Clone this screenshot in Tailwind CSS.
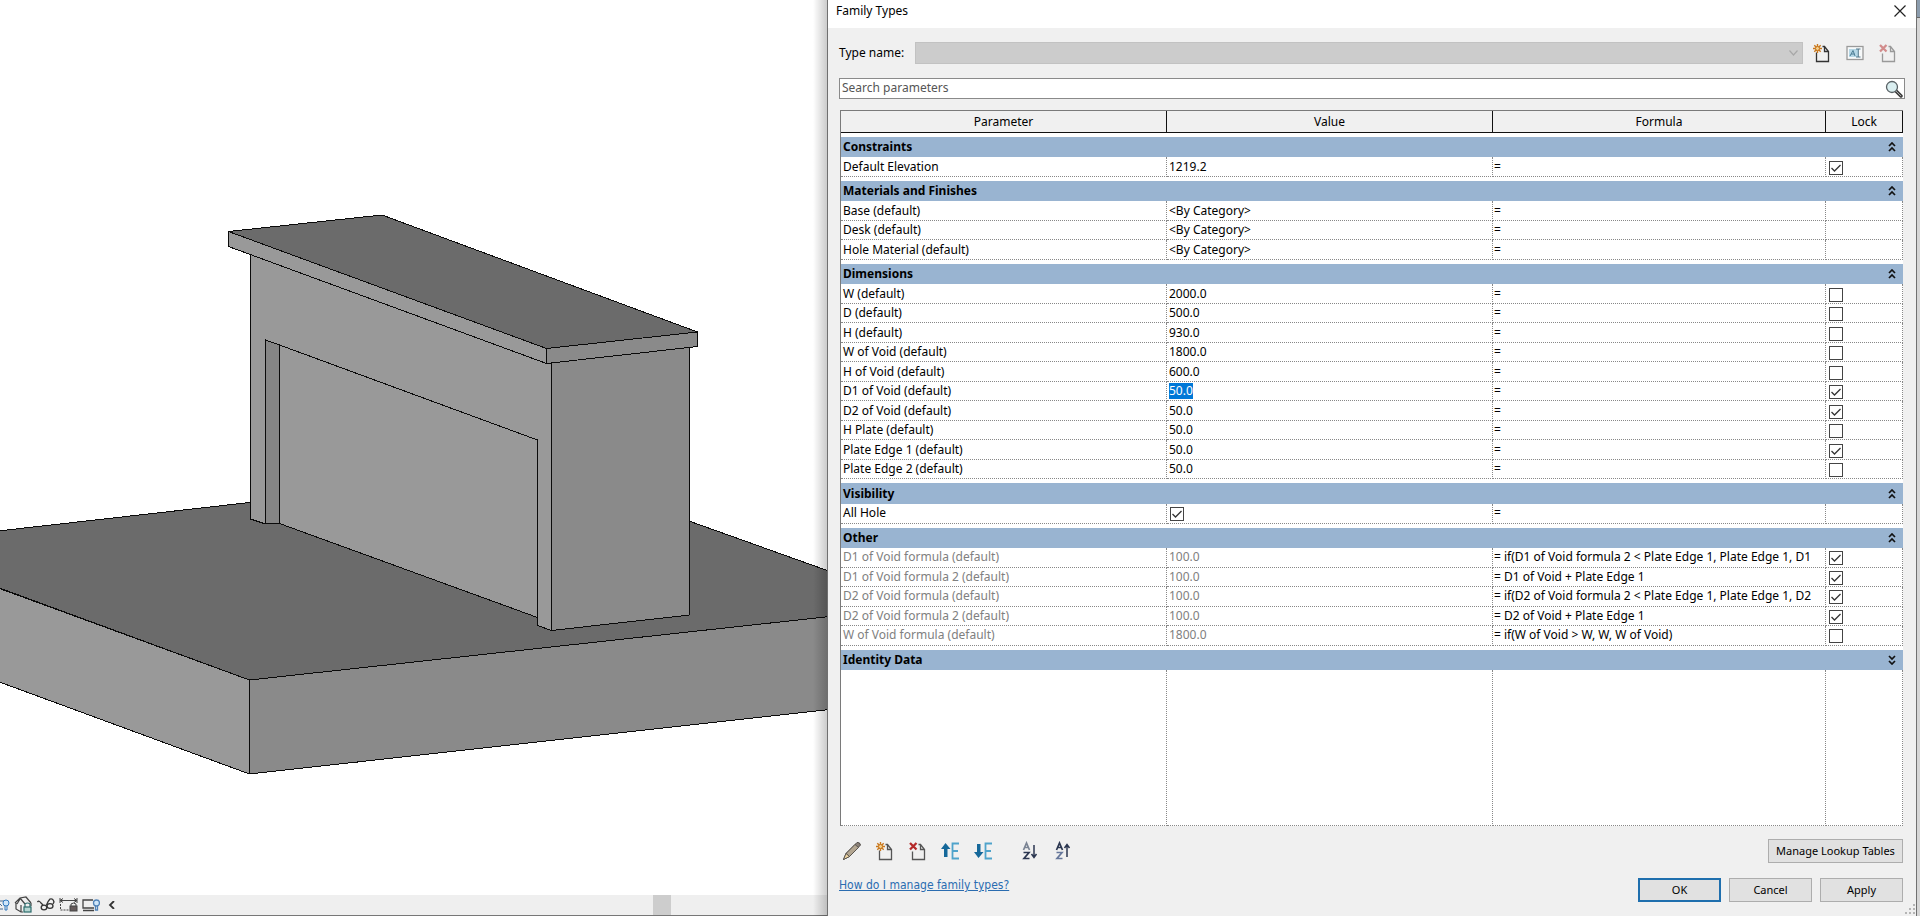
<!DOCTYPE html>
<html lang="en">
<head>
<meta charset="utf-8">
<title>Family Types</title>
<script src="https://cdn.jsdelivr.net/npm/@tailwindcss/browser@4"></script>
</head>
<body class="bg-white text-black text-[12px] leading-4 font-['Noto_Sans',sans-serif]">
<svg class="hidden" aria-hidden="true">
  <symbol id="page-new" viewBox="0 0 20 20">
    <path d="M4.500 9.500V18.500H16.500V8.500L12.500 3.500H10.500M12.500 3.500V8.500H16.500" fill="none" stroke="currentColor" stroke-width="1.300"/>
    <path d="M5.500 1V10M1 5.500H10M2.300 2.300L8.700 8.700M8.700 2.300L2.300 8.700" stroke="#c9771c" stroke-width="1.400"/>
    <circle cx="5.500" cy="5.500" r="2" fill="#f3cf8c" stroke="#c9771c"/>
  </symbol>
  <symbol id="page-delete" viewBox="0 0 20 20">
    <path d="M4.500 10.500V18.500H16.500V8.500L12.500 3.500H10.500M12.500 3.500V8.500H16.500" fill="none" stroke="currentColor" stroke-width="1.300"/>
    <path d="M2 2L8.500 8.500M8.500 2L2 8.500" stroke="#b52a2a" stroke-width="2.300"/>
  </symbol>
  <symbol id="tree" viewBox="0 0 20 20">
    <path d="M18 2.500H11.500V17.500H18M11.500 10H17" fill="none" stroke="#4fa3cb" stroke-width="1.800"/>
  </symbol>
</svg>

<div class="grid min-h-screen grid-cols-[827fr_1090fr_3fr]">
  <!-- 3D view -->
  <main class="relative flex min-w-0 flex-col overflow-hidden">
    <svg class="min-h-0 w-full flex-1" viewBox="0 0 827 895" preserveAspectRatio="xMinYMin meet" role="img" aria-label="3D view of desk" stroke="#0a0a0a" stroke-width="1" stroke-linejoin="round" shape-rendering="crispEdges">
      <path fill="#6b6b6b" d="M-2 531L382 487.500L689 521L830 571.500V616.500L249.500 680L-2 587.500Z"/>
      <path fill="#999" d="M-2 588L249.500 680V774L-2 681.500Z"/>
      <path fill="#8a8a8a" d="M249.500 680L830 616.500V709.500L249.500 774Z"/>
      <path fill="#999" d="M250.500 253V519L265.500 524L279.500 523.500L537.500 617.500V625.500L551.500 630.500V363L250.500 253Z"/>
      <path fill="#8a8a8a" d="M551.500 363V630.500L689.500 615V347Z"/>
      <path fill="#858585" d="M265.500 340V524L279.500 523.500V345Z"/>
      <path fill="none" d="M279.500 345L537.500 440V618"/>
      <path fill="#999" d="M228.500 231.500L546.500 348.500V363.500L228.500 246.500Z"/>
      <path fill="#8a8a8a" d="M546.500 348.500L697.500 332V346.500L546.500 363.500Z"/>
      <path fill="#6b6b6b" d="M228.500 231.500L382 215L697.500 332L546.500 348.500Z"/>
    </svg>
    <footer class="flex h-[21px] shrink-0 items-center gap-[4px] border-b border-[#777] bg-[#efefef]">
      <svg class="h-4 w-[10px]" viewBox="0 0 10 16" fill="none" stroke="#47698d"><path d="M0 4H4M0 7L2 9M0 12H3"/><circle cx="6" cy="6" r="3" fill="#cfe6fa" stroke="#3179be"/><path d="M5 9V13H7V9" stroke="#3179be"/></svg>
      <svg class="h-[18px] w-[19px]" viewBox="0 0 19 18" fill="none" stroke="#444" stroke-width="1.200"><path d="M1 7L6 2L12 1L17 7M2 7V13L7 16H9M6 2L11 8M7 16V9M3 8L6 3M17 7V10"/><rect x="10" y="11" width="7" height="5" fill="#b6d6d2" stroke="#2c6b6b"/><path d="M11 11V8Q13.500 6 16 8V11" stroke="#2c6b6b"/></svg>
      <svg class="h-4 w-[18px]" viewBox="0 0 18 16" fill="none" stroke="#333" stroke-width="1.300"><path d="M.5 5Q2 3 4 6L6 8M9.500 8Q11 4 13 2Q16 1 17 5L16 7"/><ellipse cx="7" cy="10.500" rx="2.800" ry="2.300"/><ellipse cx="13" cy="9" rx="3" ry="2.300"/></svg>
      <svg class="h-4 w-[19px]" viewBox="0 0 19 16" fill="none" stroke="#444"><path d="M1 1V6M18 1V6M1 3.500H18M4 1.500L1 3.500L4 5.500M15 1.500L18 3.500L15 5.500"/><path d="M1.500 7V13H10" stroke-dasharray="2 1"/><rect x="11" y="9" width="7" height="5" fill="#655b5b"/><path d="M12 9V7Q14.500 5 17 7V9"/></svg>
      <svg class="h-4 w-[18px]" viewBox="0 0 18 16" fill="none" stroke="#444" stroke-width="1.300"><path d="M11 3H1V11H12M1 13.500H12"/><circle cx="14.500" cy="6" r="3" fill="#cfe6fa" stroke="#5284b8"/><path d="M13.500 9V13H15.500V9" stroke="#5284b8"/></svg>
      <button class="flex h-4 w-4 items-center justify-center" aria-label="Collapse"><svg class="h-2 w-2" viewBox="0 0 8 8" fill="none" stroke="#333" stroke-width="1.800"><path d="M6 0L2 4L6 8"/></svg></button>
      <div class="flex h-full flex-1 justify-end pr-[156px]"><div class="w-[18px] bg-[#cdcdcd]"></div></div>
    </footer>
    <div class="pointer-events-none absolute inset-y-0 right-0 w-[14px] bg-linear-to-r from-transparent to-black/20"></div>
  </main>

  <!-- Dialog -->
  <section role="dialog" aria-label="Family Types" class="flex min-w-0 flex-col border-x border-[#707070] bg-[#f0f0f0]">
    <header class="flex h-7 items-start justify-between bg-white pt-[3px] pr-2 pl-2">
      <h1>Family Types</h1>
      <button aria-label="Close" class="p-[2px]"><svg class="h-3 w-3" viewBox="0 0 12 12" stroke="#222" stroke-width="1.200"><path d="M.5.5L11.500 11.500M11.500.5L.5 11.500"/></svg></button>
    </header>
    <div class="flex flex-1 flex-col pt-[14px] pr-[13px] pb-[14px] pl-[11px]">
      <div class="flex h-[22px] items-center pr-[5px]">
        <label for="type" class="w-[76px]">Type name:</label>
        <div class="grid h-full flex-1 items-center">
          <select id="type" disabled class="col-start-1 row-start-1 h-full w-full appearance-none border border-[#c2c2c2] bg-[#cccccc]"><option></option></select>
          <svg class="col-start-1 row-start-1 mr-[5px] h-[6px] w-[9px] justify-self-end" viewBox="0 0 9 6" fill="none" stroke="#a8a8a8" stroke-width="1.200"><path d="M.5.5L4.500 5L8.500.5"/></svg>
        </div>
        <div class="ml-[9px] flex gap-[13px]">
          <button aria-label="New type" class="text-[#333]"><svg class="size-5"><use href="#page-new"/></svg></button>
          <button aria-label="Rename type" disabled><svg class="size-5" viewBox="0 0 20 20"><rect x="2" y="3.500" width="16" height="13" fill="#f7f9fa" stroke="#9a9a9a" stroke-width="1.300"/><rect x="4" y="6" width="9" height="8" fill="#b5d7e6"/><path d="M5 13L8 7.500L10 13M6 11H9.500" fill="none" stroke="#4c7d94"/><path d="M11 6H15.500M11 14H15.500M13.300 6V14" stroke="#52788c"/></svg></button>
          <button aria-label="Delete type" disabled class="text-[#444] opacity-50"><svg class="size-5"><use href="#page-delete"/></svg></button>
        </div>
      </div>
      <div class="mt-[14px] -mr-[2px] flex h-[21px] items-center border border-[#8a8a8a] bg-white">
        <input aria-label="Search parameters" placeholder="Search parameters" class="h-full min-w-0 flex-1 pb-[2px] pl-[2px] outline-none placeholder:text-[#555]">
        <button aria-label="Search" class="mr-[1px]"><svg class="size-[18px]" viewBox="0 0 18 18"><path d="M11 11L16 16" stroke="#3f3f3f" stroke-width="3.500" stroke-linecap="round"/><path d="M11 11L16 16" stroke="#aaa" stroke-width="1"/><circle cx="7" cy="7" r="5.500" fill="#d9eef0" stroke="#596165" stroke-width="1.300"/></svg></button>
      </div>
      <div class="mt-[11px] ml-[1px] flex flex-1 flex-col border-t border-l border-[#7a7a7a] bg-white">
        <table class="w-full flex-1 table-fixed border-separate border-spacing-0 text-left" id="params">
          <colgroup><col class="w-[326px]"><col class="w-[326px]"><col><col class="w-[77px]"></colgroup>
          <thead>
            <tr class="h-[22px] bg-[#f0f0f0] text-center">
              <th class="border-r border-b border-[#111] p-0 font-normal">Parameter</th>
              <th class="border-r border-b border-[#111] p-0 font-normal">Value</th>
              <th class="border-r border-b border-[#111] p-0 font-normal">Formula</th>
              <th class="border-r border-b border-[#111] p-0 font-normal">Lock</th>
            </tr>
          </thead>
        </table>
      </div>
      <div class="flex items-center justify-between pt-[13px]">
        <div class="flex gap-[13px] pl-[3px] text-[#555]">
          <button aria-label="Edit parameter"><svg class="size-5" viewBox="0 0 20 20"><path d="M1.500 18.500L4 12.500L15 1.500Q18 1 18.500 4L7.500 15.500Z" fill="#8b8178" stroke="#4d4945"/><path d="M4 12.500L13 3.500L16.500 6.500L7.500 15.500Z" fill="#b3a691" stroke="#4d4945" stroke-width=".8"/><path d="M1.500 18.500L4 12.500L7.500 15.500Z" fill="#f1d6a2" stroke="#4d4945" stroke-width=".8"/></svg></button>
          <button aria-label="New parameter"><svg class="size-5"><use href="#page-new"/></svg></button>
          <button aria-label="Delete parameter"><svg class="size-5"><use href="#page-delete"/></svg></button>
          <button aria-label="Move up"><svg class="size-5" viewBox="0 0 20 20"><use href="#tree"/><path d="M4.500 2L9.500 8H6.500V16H3V8H0Z" fill="#15689a"/></svg></button>
          <button aria-label="Move down"><svg class="size-5" viewBox="0 0 20 20"><use href="#tree"/><path d="M4.500 17L9.500 11H6.500V3H3V11H0Z" fill="#15689a"/></svg></button>
          <button aria-label="Sort ascending" class="ml-[13px]"><svg class="size-5" viewBox="0 0 20 20" fill="none" stroke-width="1.700"><path d="M3.500 9L6.500 2L9.500 9M4.500 6.500H8.500" stroke="#7b8494"/><path d="M3.500 11.500H9L4 17.500H9.500" stroke="#2b3650"/><path d="M14 4V16M11.500 13L14 16.500L16.500 13" stroke="#2b3650" stroke-width="1.500"/></svg></button>
          <button aria-label="Sort descending"><svg class="size-5" viewBox="0 0 20 20" fill="none" stroke-width="1.700"><path d="M3.500 9L6.500 2L9.500 9M4.500 6.500H8.500" stroke="#2b3650"/><path d="M3.500 11.500H9L4 17.500H9.500" stroke="#66779b"/><path d="M14 16V4M11.500 7L14 3.500L16.500 7" stroke="#2b3650" stroke-width="1.500"/></svg></button>
        </div>
        <button class="h-6 w-[135px] border border-[#adadad] bg-[#e1e1e1] text-[11px]">Manage Lookup Tables</button>
      </div>
      <div class="flex items-start justify-between pt-[14px]">
        <a href="#" class="font-['DejaVu_Sans_Condensed','DejaVu_Sans',sans-serif] text-[#2a6cb0] underline">How do I manage family types?</a>
        <div class="flex gap-2 pt-[1px] text-[11px]">
          <button class="h-6 w-[83px] border-2 border-[#1f6fae] bg-[#e1e1e1]">OK</button>
          <button class="h-6 w-[83px] border border-[#adadad] bg-[#e1e1e1]">Cancel</button>
          <button class="h-6 w-[83px] border border-[#adadad] bg-[#e1e1e1]">Apply</button>
        </div>
      </div>
    </div>
    <!-- Resize grip -->
    <svg class="absolute right-[5px] bottom-[2px] h-[10px] w-[10px]" viewBox="0 0 10 10" fill="#b5b5b5"><path d="M8 0h2v2H8zM4 4h2v2H4zM8 4h2v2H8zM0 8h2v2H0zM4 8h2v2H4zM8 8h2v2H8z"/></svg>
  </section>
  <div class="bg-[#d6d6d6]"><div class="h-[18px] border-b border-[#666] bg-[#8b9cad]"></div></div>
</div>

<script>
// Row: [parameter, value, formula, lock]; lock is true, false or null (no box).
const groups = [
  ["Constraints", [["Default Elevation", "1219.2", "=", true]]],
  ["Materials and Finishes", [
    ["Base (default)", "<By Category>", "=", null],
    ["Desk (default)", "<By Category>", "=", null],
    ["Hole Material (default)", "<By Category>", "=", null]]],
  ["Dimensions", [
    ["W (default)", "2000.0", "=", false],
    ["D (default)", "500.0", "=", false],
    ["H (default)", "930.0", "=", false],
    ["W of Void (default)", "1800.0", "=", false],
    ["H of Void (default)", "600.0", "=", false],
    ["D1 of Void (default)", "50.0", "=", true, "selected"],
    ["D2 of Void (default)", "50.0", "=", true],
    ["H Plate (default)", "50.0", "=", false],
    ["Plate Edge 1 (default)", "50.0", "=", true],
    ["Plate Edge 2 (default)", "50.0", "=", false]]],
  ["Visibility", [["All Hole", true, "=", null]]],
  ["Other", [
    ["D1 of Void formula (default)", "100.0", "= if(D1 of Void formula 2 < Plate Edge 1, Plate Edge 1, D1", true, "computed"],
    ["D1 of Void formula 2 (default)", "100.0", "= D1 of Void + Plate Edge 1", true, "computed"],
    ["D2 of Void formula (default)", "100.0", "= if(D2 of Void formula 2 < Plate Edge 1, Plate Edge 1, D2", true, "computed"],
    ["D2 of Void formula 2 (default)", "100.0", "= D2 of Void + Plate Edge 1", true, "computed"],
    ["W of Void formula (default)", "1800.0", "= if(W of Void > W, W, W of Void)", false, "computed"]]],
  ["Identity Data", []]
];
const esc = s => s.replace(/&/g, "&amp;").replace(/</g, "&lt;").replace(/>/g, "&gt;");
const box = (on, label) => `<span class="ml-[3px] grid size-[14px] translate-y-px"><input type="checkbox" aria-label="${label}" ${on ? "checked" : ""} class="peer col-start-1 row-start-1 size-[14px] appearance-none border border-[#444] bg-white"><svg class="pointer-events-none invisible col-start-1 row-start-1 size-[14px] peer-checked:visible" viewBox="0 0 14 14" fill="none" stroke="#333" stroke-width="1.300"><path d="M2.500 7L5.500 10L11.500 4"/></svg></span>`;
const cell = "border-r border-b border-dotted border-[#888] p-0";
const table = document.getElementById("params");
for (const [name, rows] of groups) {
  const body = document.createElement("tbody");
  const d = rows.length ? "M1 4L4 1L7 4M1 9L4 6L7 9" : "M1 1L4 4L7 1M1 6L4 9L7 6";
  let html = `<tr class="h-6"><th colspan="4" class="h-6 border-t-4 border-white bg-[#99b4d1] p-0 pl-[2px]"><div class="flex items-center justify-between pr-[7px]"><span>${name}</span><button aria-label="Toggle ${name}"><svg class="h-[10px] w-2" viewBox="0 0 8 10" fill="none" stroke="#111" stroke-width="1.700"><path d="${d}"/></svg></button></div></th></tr>`;
  for (const [p, v, f, lock, state] of rows) {
    const tone = state === "computed" ? "text-[#808080]" : "text-black";
    const look = state === "selected" ? "w-[24px] bg-[#0078d7] text-white" : "w-full";
    const value = v === true ? box(true, p)
      : `<input aria-label="${p} value" value="${esc(v)}" ${state === "computed" ? "readonly" : ""} class="block h-4 ${look} outline-none">`;
    html += `<tr class="h-[19px] even:h-5"><td class="${cell} pl-[2px] ${tone}">${p}</td>`
      + `<td class="${cell} ${v === true ? "" : "pl-[2px]"} ${tone}">${value}</td>`
      + `<td class="${cell}"><input aria-label="${p} formula" value="${esc(f)}" class="block h-4 w-full pl-[1px] outline-none"></td>`
      + `<td class="${cell}">${lock === null ? "" : box(lock, p + " lock")}</td></tr>`;
  }
  if (!rows.length) html += `<tr class="h-[156px]">${`<td class="${cell}"></td>`.repeat(4)}</tr>`;
  body.innerHTML = html;
  table.append(body);
}
</script>
</body>
</html>
